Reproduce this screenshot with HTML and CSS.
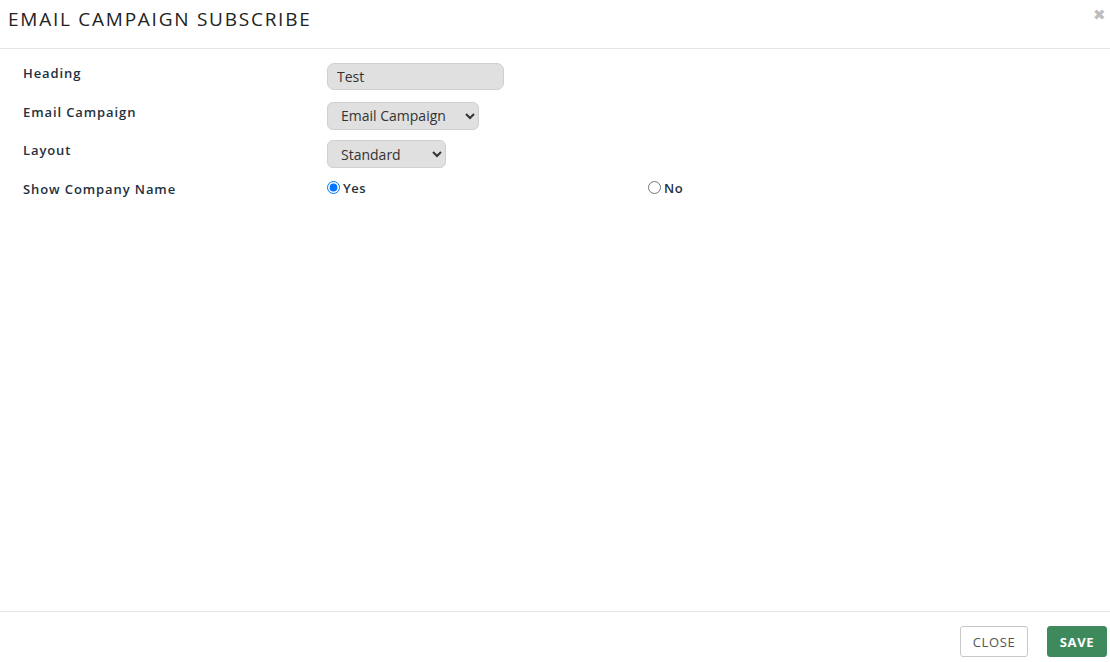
FILE: index.html
```html
<!DOCTYPE html>
<html>
<head>
<meta charset="utf-8">
<link rel="stylesheet" href="styles.css">
</head>
<body>
<div class="modal">
  <header class="modal-header">
    <h1 class="modal-title">EMAIL CAMPAIGN SUBSCRIBE</h1>
    <span class="close-x">&#x2716;</span>
  </header>
  <main class="modal-body">
    <div class="row">
      <label class="lbl">Heading</label>
      <div class="ctl"><input class="text-input" type="text" value="Test"></div>
    </div>
    <div class="row">
      <label class="lbl">Email Campaign</label>
      <div class="ctl"><select class="sel sel-campaign"><option>Email Campaign</option></select></div>
    </div>
    <div class="row">
      <label class="lbl">Layout</label>
      <div class="ctl"><select class="sel sel-layout"><option>Standard</option></select></div>
    </div>
    <div class="row radio-row">
      <label class="lbl">Show Company Name</label>
      <label class="radio"><input type="radio" name="scn" checked> Yes</label>
      <label class="radio"><input type="radio" name="scn"> No</label>
    </div>
  </main>
  <footer class="modal-footer">
    <button class="btn btn-close">CLOSE</button>
    <button class="btn btn-save">SAVE</button>
  </footer>
</div>
</body>
</html>
```
FILE: styles.css
```css
* { box-sizing: border-box; }
html, body { margin: 0; padding: 0; background: #fff; }
body {
  font-family: "Open Sans", "Liberation Sans", sans-serif;
  color: #1f2d3d;
  width: 1110px;
  height: 662px;
  overflow: hidden;
}
.modal {
  display: flex;
  flex-direction: column;
  height: 662px;
}
.modal-header {
  height: 49px;
  border-bottom: 1px solid #e5e5e5;
  display: flex;
  justify-content: space-between;
  align-items: flex-start;
  padding: 0 4px 0 8px;
}
.modal-title {
  margin: 6px 0 0 0;
  font-size: 19px;
  font-weight: 400;
  letter-spacing: 1.75px;
  color: #222;
}
.close-x {
  margin-top: 4px;
  font-size: 15px;
  color: #bdbdbd;
}
.modal-body {
  flex: 1;
  padding: 13px 0 0 23px;
}
.row {
  display: grid;
  grid-template-columns: 304px 321px 1fr;
  align-items: start;
  margin-bottom: 10.5px;
  height: 28px;
}
.lbl {
  font-size: 13px;
  font-weight: 600;
  letter-spacing: 0.9px;
  color: #1f3040;
  padding-top: 2px;
}
.ctl { padding-top: 1px; }
.text-input {
  width: 177px;
  height: 27px;
  border: 1px solid #d0d0d0;
  border-radius: 7px;
  background: #e0e0e0;
  font-family: inherit;
  font-size: 14px;
  color: #333;
  padding: 0 9px;
}
.sel {
  height: 28px;
  border: 1px solid #d0d0d0;
  border-radius: 6px;
  background: #e0e0e0;
  font-family: inherit;
  font-size: 14px;
  color: #333;
  padding: 0 4px 0 9px;
}
.sel-campaign { width: 152px; }
.sel-layout { width: 119px; }
.radio-row { height: 20px; }
.radio {
  font-size: 13px;
  font-weight: 600;
  letter-spacing: 0.5px;
  color: #1f3040;
  display: flex;
  align-items: center;
  gap: 3px;
  padding-top: 1px;
}
.radio input { margin: 0; width: 13px; height: 13px; }
.modal-footer {
  height: 51px;
  border-top: 1px solid #e5e5e5;
  display: flex;
  justify-content: flex-end;
  align-items: center;
  gap: 19px;
  padding: 9px 3px 0 0;
}
.btn {
  height: 31px;
  font-family: inherit;
  font-size: 13px;
  border-radius: 3px;
  letter-spacing: 0.6px;
}
.btn-close {
  width: 68px;
  background: #fff;
  border: 1px solid #c8c8c8;
  color: #555;
}
.btn-save {
  width: 60px;
  background: #3e8a5c;
  border: 1px solid #3e8a5c;
  color: #fff;
  font-weight: 700;
}
```
